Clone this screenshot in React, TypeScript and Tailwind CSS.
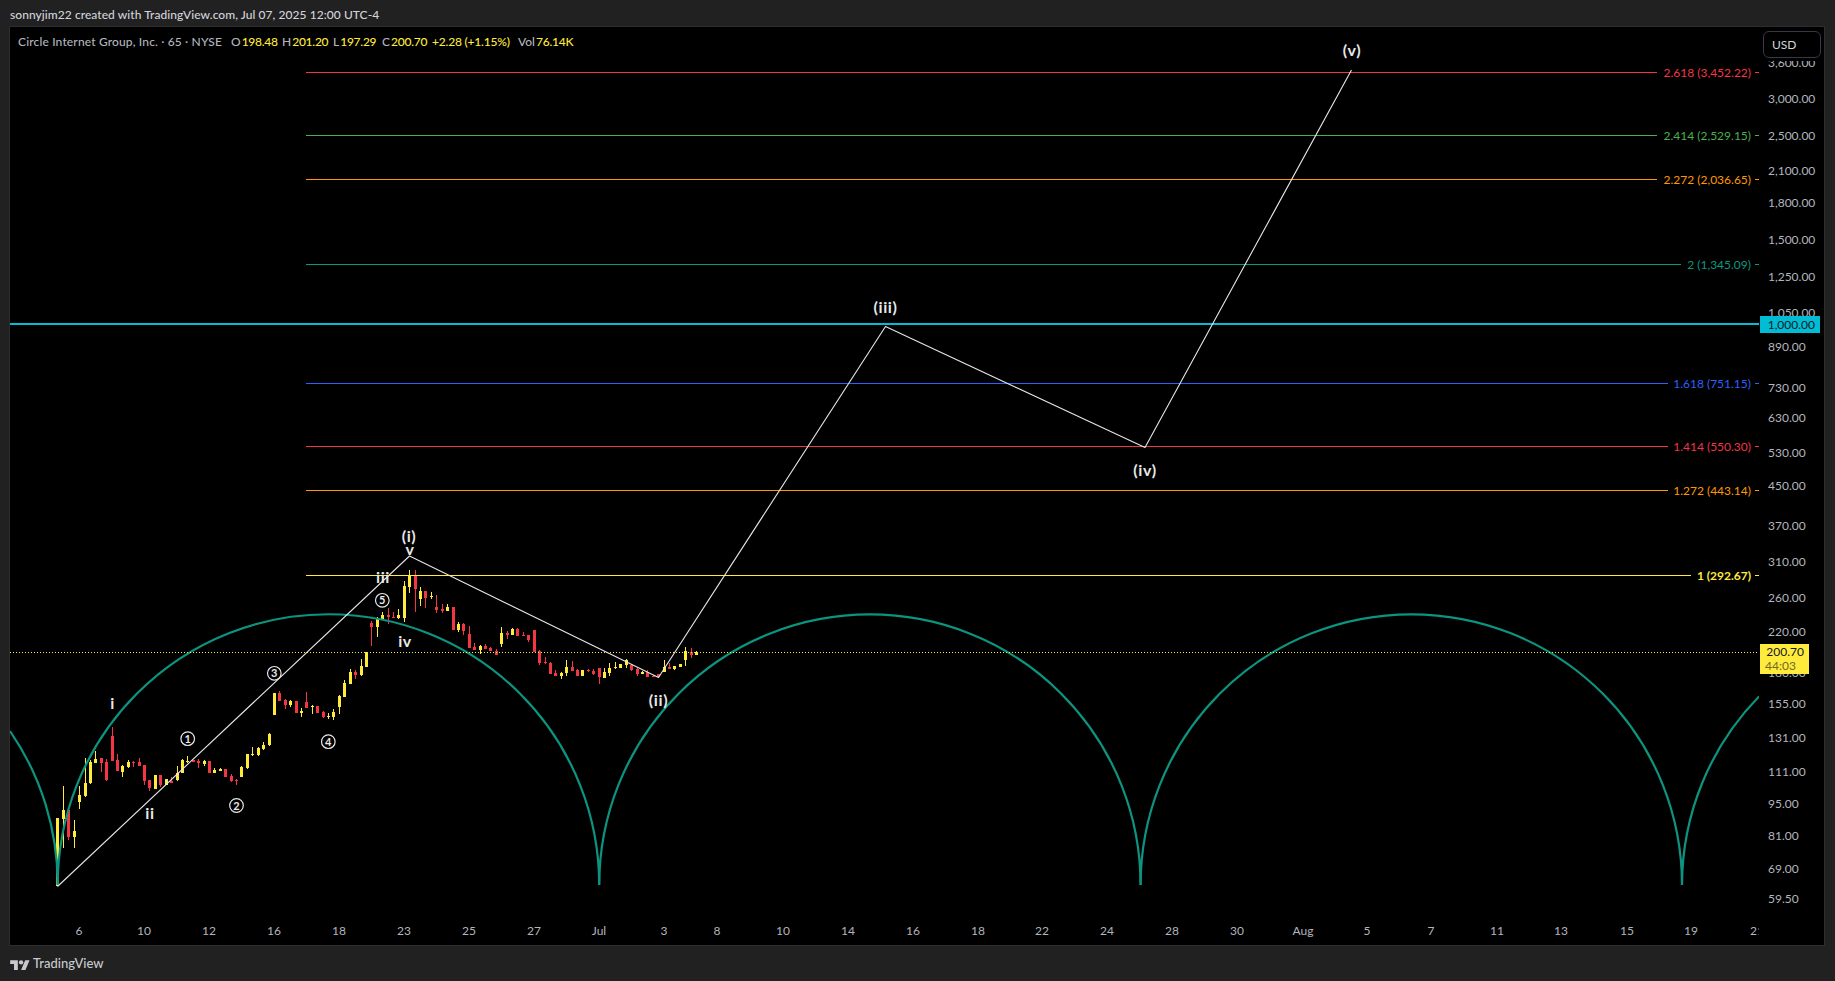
import React from "react";

type C = [number, number, number, number, number, number]; // x, wickTop, bodyTop, bodyBottom, wickBottom, up(1)/down(0)

const Z5: number[][] = [
  [172, 415, 415, 618, 618, 1], [190, 318, 390, 416, 505, 1], [205, 390, 390, 472, 480, 0], [223, 420, 453, 470, 505, 1],
  [238, 318, 345, 365, 387, 1], [256, 235, 310, 348, 350, 1], [271, 240, 245, 310, 312, 1], [286, 213, 237, 248, 248, 1],
  [304, 235, 235, 248, 275, 0], [319, 238, 246, 300, 302, 0], [337, 142, 168, 242, 242, 0], [352, 222, 240, 272, 272, 0],
  [367, 256, 258, 275, 290, 1], [385, 241, 245, 260, 263, 1], [400, 243, 245, 247, 260, 0], [418, 235, 246, 258, 258, 0],
  [433, 255, 255, 302, 315, 0], [448, 300, 300, 323, 332, 0], [466, 285, 285, 327, 327, 1], [481, 285, 285, 316, 320, 0],
  [499, 297, 297, 315, 315, 1], [514, 292, 302, 310, 310, 0], [532, 258, 280, 300, 302, 1], [547, 237, 240, 278, 278, 1],
  [562, 228, 242, 245, 250, 1], [580, 240, 240, 245, 245, 0], [595, 238, 243, 250, 263, 0], [613, 240, 243, 252, 258, 1],
  [628, 242, 242, 280, 280, 0], [643, 265, 270, 278, 278, 1],
];
const Z9: number[][] = [
  [16, 204, 207, 212, 213, 1], [31, 207, 207, 231, 231, 0], [49, 222, 228, 243, 245, 0], [64, 237, 240, 242, 255, 0],
  [79, 198, 201, 231, 232, 1], [97, 162, 162, 204, 208, 1], [112, 141, 162, 165, 167, 1], [130, 141, 144, 165, 167, 1],
  [145, 126, 135, 146, 149, 1], [163, 99, 102, 135, 137, 1],
];
const Z6: number[][] = [
  [163, 488, 488, 555, 555, 1], [178, 484, 489, 513, 513, 0], [196, 508, 510, 525, 537, 0], [211, 511, 514, 525, 530, 1],
  [229, 513, 513, 550, 550, 0], [244, 535, 542, 550, 560, 1], [259, 486, 516, 533, 533, 0], [277, 525, 528, 530, 552, 1],
  [292, 528, 528, 550, 550, 0], [310, 544, 547, 562, 565, 0], [325, 548, 558, 560, 566, 1], [340, 538, 545, 562, 570, 1],
  [358, 495, 497, 530, 552, 1], [373, 450, 459, 500, 500, 1], [391, 418, 426, 461, 463, 1], [406, 420, 427, 435, 447, 0],
  [424, 388, 408, 435, 437, 1], [439, 365, 367, 412, 412, 1], [454, 274, 280, 290, 347, 0], [472, 262, 268, 290, 320, 1],
  [487, 247, 255, 266, 268, 1], [505, 235, 256, 262, 282, 0], [520, 247, 262, 264, 265, 0], [535, 238, 255, 264, 266, 1],
  [553, 153, 168, 263, 275, 1], [568, 120, 137, 170, 188, 1], [586, 120, 137, 178, 245, 0], [601, 172, 183, 207, 227, 1],
  [616, 183, 183, 204, 233, 0], [634, 186, 197, 199, 206, 1], [649, 195, 232, 241, 248, 0], [667, 222, 236, 243, 248, 0],
  [682, 222, 231, 243, 243, 1], [700, 231, 231, 299, 299, 0], [715, 277, 282, 300, 305, 1],
];
const Z7: number[][] = [
  [10, 250, 252, 273, 285, 0], [28, 258, 282, 324, 325, 0], [43, 310, 320, 330, 330, 0], [61, 315, 318, 330, 342, 1],
  [76, 312, 318, 326, 328, 0], [91, 322, 324, 332, 333, 0], [109, 327, 332, 344, 345, 0], [124, 262, 279, 312, 320, 1],
  [142, 273, 280, 285, 297, 0], [157, 264, 267, 284, 285, 1], [172, 265, 267, 288, 288, 0], [190, 277, 286, 288, 288, 0],
  [205, 285, 286, 300, 306, 0], [223, 270, 270, 335, 335, 0], [238, 330, 334, 370, 374, 0], [256, 352, 366, 368, 372, 0],
  [271, 366, 368, 402, 402, 0], [286, 390, 400, 408, 408, 0], [304, 395, 398, 407, 416, 1], [319, 360, 380, 400, 407, 1],
  [337, 363, 381, 392, 394, 0], [352, 388, 390, 408, 408, 0], [367, 390, 390, 408, 408, 1], [385, 387, 390, 393, 396, 0],
  [400, 388, 392, 402, 405, 0], [418, 385, 385, 411, 432, 0], [433, 385, 396, 414, 414, 1], [448, 370, 384, 400, 408, 1],
  [466, 367, 381, 384, 386, 1], [481, 372, 372, 384, 384, 1], [499, 357, 361, 374, 384, 1], [514, 373, 376, 390, 392, 0],
  [532, 382, 388, 402, 408, 0], [547, 392, 396, 402, 402, 1], [562, 390, 397, 410, 412, 0], [580, 405, 407, 411, 412, 0],
  [595, 402, 403, 410, 412, 0], [613, 360, 380, 396, 396, 1], [628, 370, 381, 387, 388, 0], [643, 378, 378, 388, 390, 1],
  [661, 372, 372, 381, 381, 1], [676, 322, 333, 360, 378, 1], [694, 324, 335, 345, 354, 0], [709, 333, 336, 345, 345, 1],
];

const place = (rows: number[][], ox: number, oy: number): C[] =>
  rows.map((r) => [
    Math.round(ox + r[0] / 3 - 0.5),
    Math.round(oy + r[1] / 3),
    Math.round(oy + r[2] / 3),
    Math.round(oy + r[3] / 3),
    Math.round(oy + r[4] / 3),
    r[5],
  ]);

const candles: C[] = [
  ...place(Z5, 0, 680),
  ...place(Z9, 215, 700),
  ...place(Z6, 220, 530),
  ...place(Z7, 460, 540),
];

const RED = "#f23645";
const YEL = "#ffeb3b";
const TEAL = "#089981";

const fib = [
  { y: 72, end: 1657, color: RED, label: "2.618 (3,452.22)" },
  { y: 135, end: 1657, color: "#4caf50", label: "2.414 (2,529.15)" },
  { y: 179, end: 1657, color: "#ff9800", label: "2.272 (2,036.65)" },
  { y: 264, end: 1681, color: TEAL, label: "2 (1,345.09)" },
  { y: 383, end: 1668, color: "#2962ff", label: "1.618 (751.15)" },
  { y: 446, end: 1668, color: RED, label: "1.414 (550.30)" },
  { y: 490, end: 1668, color: "#ff9800", label: "1.272 (443.14)" },
  { y: 575, end: 1691, color: YEL, label: "1 (292.67)" },
];

const wave = "57.5,886.5 409.5,556 658.5,677.5 885.5,326.5 1145,447.5 1351.5,70";

const R = 270.6;
const cusps = [57.7, 599.2, 1140.6, 1682];
const arcs =
  `M10,731 A${R},${R} 0 0 1 57.7,885 ` +
  `A${R},${R} 0 0 1 599.2,885 A${R},${R} 0 0 1 1140.6,885 A${R},${R} 0 0 1 1682,885 ` +
  `A${R},${R} 0 0 1 1759,696.5`;

const waveLabels: [string, number, number][] = [
  ["(i)", 409, 536], ["v", 410, 549], ["iii", 383, 577], ["iv", 405, 641], ["i", 112.5, 703], ["ii", 150, 813],
  ["(ii)", 658.5, 700], ["(iii)", 885.5, 307], ["(iv)", 1145, 470], ["(v)", 1352, 50],
];
const circled: [string, number, number][] = [
  ["1", 187.7, 738.7], ["2", 236.5, 805.5], ["3", 274.3, 673.3], ["4", 328.3, 741.7], ["5", 382.3, 600.3],
];

const prices: [string, number][] = [
  ["3,600.00", 63], ["3,000.00", 99], ["2,500.00", 136], ["2,100.00", 171], ["1,800.00", 203], ["1,500.00", 240],
  ["1,250.00", 277], ["1,050.00", 313], ["890.00", 347], ["730.00", 388], ["630.00", 418], ["530.00", 453],
  ["450.00", 486], ["370.00", 526], ["310.00", 562], ["260.00", 598], ["220.00", 632], ["180.00", 673],
  ["155.00", 704], ["131.00", 738], ["111.00", 772], ["95.00", 804], ["81.00", 836], ["69.00", 869], ["59.50", 899],
];

const dates: [string, number][] = [
  ["6", 79], ["10", 144], ["12", 209], ["16", 274], ["18", 339], ["23", 404], ["25", 469], ["27", 534], ["Jul", 599],
  ["3", 664], ["8", 717], ["10", 783], ["14", 848], ["16", 913], ["18", 978], ["22", 1042], ["24", 1107], ["28", 1172],
  ["30", 1237], ["Aug", 1303], ["5", 1367], ["7", 1431], ["11", 1497], ["13", 1561], ["15", 1627], ["19", 1691], ["21", 1757],
];

function Plot() {
  return (
    <svg className="block h-[890px] w-[1749px]" viewBox="10 27 1749 890" fill="none">
      <g shapeRendering="crispEdges">
        {candles.map((c, i) => {
          const col = c[5] ? YEL : RED;
          return (
            <g key={i} fill={col}>
              <rect x={c[0]} y={c[1]} width={1} height={Math.max(1, c[4] - c[1])} />
              <rect x={c[0] - 1} y={c[2]} width={3} height={Math.max(1, c[3] - c[2])} />
            </g>
          );
        })}
      </g>
      <path d={arcs} stroke="#0c9480" strokeWidth={2.2} />
      {cusps.map((x) => (
        <line key={x} x1={x} x2={x} y1={870} y2={885} stroke="#0c9480" strokeWidth={2} />
      ))}
      <line x1={10} x2={1759} y1={652.5} y2={652.5} stroke={YEL} strokeDasharray="1 2" />
      <g shapeRendering="crispEdges">
        {fib.map((f) => (
          <g key={f.y} fill={f.color}>
            <rect x={306} y={f.y} width={f.end - 306} height={1} />
            <rect x={1755} y={f.y} width={4} height={1} />
          </g>
        ))}
        <rect x={10} y={323} width={1749} height={2} fill="#00bcd4" />
      </g>
      {fib.map((f) => (
        <text
          key={f.y}
          x={1751}
          y={f.y + 4.5}
          textAnchor="end"
          fill={f.color}
          fontSize={12}
          fontWeight={f.y === 575 ? 700 : 400}
        >
          {f.label}
        </text>
      ))}
      <polyline points={wave} stroke="#e6e6ea" strokeWidth={1.1} strokeLinejoin="round" />
      {waveLabels.map(([t, x, y]) => (
        <text
          key={t + x}
          x={x}
          y={y + 5.5}
          textAnchor="middle"
          fill="#e8e8e8"
          fontSize={16}
          fontWeight={700}
          letterSpacing={0.6}
        >
          {t}
        </text>
      ))}
      {circled.map(([t, x, y]) => (
        <g key={t}>
          <circle cx={x} cy={y} r={6.8} stroke="#e8e8e8" strokeWidth={1.2} />
          <text x={x} y={y + 4} textAnchor="middle" fill="#e8e8e8" fontSize={11} fontWeight={700}>
            {t}
          </text>
        </g>
      ))}
    </svg>
  );
}

function Legend() {
  const Lab = ({ l, v, cls }: { l: string; v: string; cls: string }) => (
    <span className={cls}>
      {l}
      <span className="pl-[1px] tracking-[-0.25px] text-[#ffeb3b]">{v}</span>
    </span>
  );
  return (
    <div className="absolute left-[8px] top-[6px] flex h-[18px] items-center whitespace-nowrap text-[12px] font-medium text-[#b2b5be]">
      <span className="w-[213px] tracking-[0.15px]">Circle Internet Group, Inc. · 65 · NYSE</span>
      <Lab l="O" v="198.48" cls="w-[51px]" />
      <Lab l="H" v="201.20" cls="w-[51px]" />
      <Lab l="L" v="197.29" cls="w-[49px]" />
      <Lab l="C" v="200.70" cls="w-[50px]" />
      <span className="w-[86px] tracking-[-0.2px] text-[#ffeb3b]">+2.28 (+1.15%)</span>
      <Lab l="Vol" v="76.14K" cls="" />
    </div>
  );
}

function PriceAxis() {
  return (
    <div className="relative h-full w-[65px] text-[12px] text-[#b2b5be]">
      {prices.map(([p, y]) => (
        <span key={p} className="absolute left-[9px] leading-[16px]" style={{ top: y - 27 - 8 }}>
          {p}
        </span>
      ))}
      <div className="absolute left-0 top-0 h-[34px] w-full bg-black" />
      <div className="absolute left-[4px] top-[4px] flex h-[27px] w-[58px] items-center rounded-md border border-[#363a45] bg-black pl-[8px] text-[#d1d4dc]">
        USD
      </div>
      <div className="absolute left-[1px] top-[289px] flex h-[17px] w-[60px] items-center justify-end bg-[#00bcd4] pr-[5px] text-[#131722]">
        1,000.00
      </div>
      <div className="absolute left-[1px] top-[617px] flex h-[30px] w-[49px] flex-col items-end justify-center bg-[#ffeb3b] pr-[5px] leading-[14px] text-[#131722]">
        <span>200.70</span>
        <span className="w-[39px] text-left text-[#6f6a1f]">44:03</span>
      </div>
    </div>
  );
}

function TimeAxis() {
  return (
    <div className="relative h-[28px] w-[1749px] overflow-hidden text-[12px] text-[#b2b5be]">
      {dates.map(([d, x]) => (
        <span key={d + x} className="absolute top-[6px] -translate-x-1/2 leading-[16px]" style={{ left: x - 10 }}>
          {d}
        </span>
      ))}
    </div>
  );
}

export default function App() {
  return (
    <div className="flex h-[981px] w-[1835px] flex-col overflow-hidden bg-[#212121] font-[family-name:Lato,sans-serif]">
      <div className="flex h-[26px] items-center pl-[10px] pt-[3px] text-[12px] font-medium tracking-[0.06px] text-[#d1d4dc]">
        sonnyjim22 created with TradingView.com, Jul 07, 2025 12:00 UTC-4
      </div>
      <div className="ml-[9px] mr-[10px] flex h-[920px] border border-[#2e2e2e] bg-black">
        <div className="relative flex w-[1749px] flex-col">
          <Plot />
          <TimeAxis />
          <Legend />
        </div>
        <PriceAxis />
      </div>
      <div className="flex flex-1 items-center gap-[3px] pl-[10px] text-[#c8cad0]">
        <svg width="20" height="12" viewBox="0 0 36 22" fill="currentColor">
          <path d="M14 22H7V11H0V4h14v18zM28 22h-8l7.5-18h8L28 22z" />
          <circle cx="20" cy="8" r="4" />
        </svg>
        <span className="text-[13px] font-medium">TradingView</span>
      </div>
    </div>
  );
}
